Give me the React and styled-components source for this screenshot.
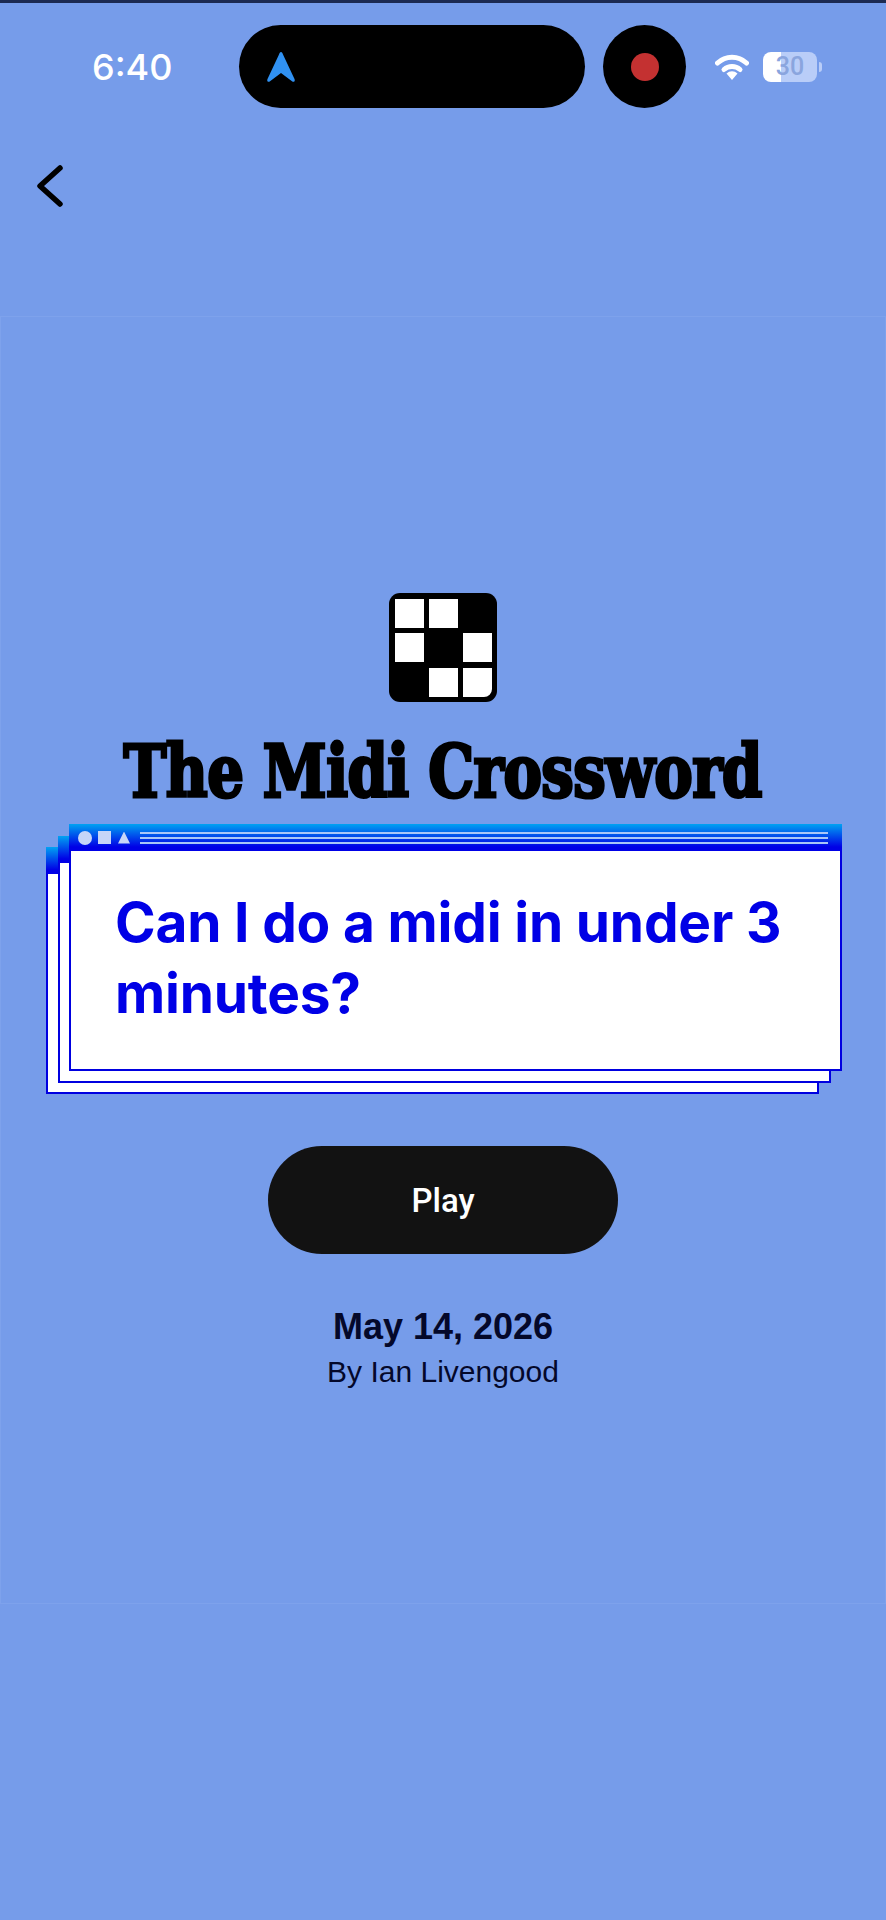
import styled, { createGlobalStyle } from "styled-components";

const GlobalStyle = createGlobalStyle`
  html, body {
    margin: 0;
    padding: 0;
    background: #769cea;
  }
`;

const Page = styled.div`
  width: 886px;
  height: 1920px;
  overflow: hidden;
  background: #769cea;
  border-top: 3px solid #1c2a52;
  box-sizing: border-box;
  font-family: "Liberation Sans", Arial, sans-serif;
`;

const StatusBar = styled.div`
  display: flex;
  align-items: center;
  height: 83px;
  margin-top: 22px;
  padding-left: 92px;
`;

const Clock = styled.div`
  width: 147px;
  color: #fff;
  font-family: Inter, sans-serif;
  font-size: 36px;
  font-weight: 500;
`;

const Island = styled.div`
  width: 346px;
  height: 83px;
  border-radius: 42px;
  background: #000;
  display: flex;
  align-items: center;
  padding-left: 28px;
  box-sizing: border-box;
`;

const RecordBubble = styled.div`
  width: 83px;
  height: 83px;
  margin-left: 18px;
  border-radius: 50%;
  background: #000;
  display: flex;
  align-items: center;
  justify-content: center;
`;

const RecordDot = styled.div`
  width: 28px;
  height: 28px;
  border-radius: 50%;
  background: #c43131;
`;

const WifiIcon = styled.svg`
  width: 34px;
  height: 27px;
  margin-left: 29px;
`;

const Battery = styled.div`
  width: 54px;
  height: 30px;
  margin-left: 14px;
  border-radius: 8px;
  background: linear-gradient(to right, #fff 33%, #b9cdf8 33%);
  color: #8aa5de;
  font-family: Roboto, sans-serif;
  font-size: 25px;
  font-weight: 500;
  line-height: 30px;
  text-align: center;
  position: relative;

  &::after {
    content: "";
    position: absolute;
    right: -5px;
    top: 10px;
    width: 3px;
    height: 10px;
    border-radius: 0 3px 3px 0;
    background: #b9cdf8;
  }
`;

const NavRow = styled.div`
  height: 208px;
  padding: 54px 0 0 34px;
  box-sizing: border-box;
`;

const BackIcon = styled.svg`
  display: block;
  width: 32px;
  height: 48px;
`;

const Panel = styled.main`
  height: 1288px;
  box-sizing: border-box;
  border: 1px solid #7ea2ec;
  padding-top: 276px;
  display: flex;
  flex-direction: column;
  align-items: center;
`;

const Logo = styled.svg`
  display: block;
  width: 108px;
  height: 109px;
`;

const GameTitle = styled.h1`
  margin: 30px 0 0;
  color: #000;
  font-family: "DejaVu Serif Condensed", "DejaVu Serif", serif;
  font-size: 72px;
  font-weight: 700;
  line-height: 79px;
  letter-spacing: -0.6px;
  white-space: nowrap;
  -webkit-text-stroke: 3px #000;
  transform: scaleX(0.89);
`;

const WindowStack = styled.div`
  display: grid;
  width: 796px;
  margin-top: 13px;
  margin-left: 2px;
`;

const Window = styled.div`
  grid-area: 1 / 1;
  margin: ${(p) => p.$depth * 11.5}px ${(p) => p.$depth * 11.5}px
    ${(p) => (2 - p.$depth) * 11.5}px ${(p) => (2 - p.$depth) * 11.5}px;
  background: #fff;
  border: solid #0000e0;
  border-width: 0 2px 2px;
  display: flex;
  flex-direction: column;
`;

const TitleBar = styled.div`
  height: 27px;
  margin: 0 -2px;
  padding: 0 14px 0 9px;
  flex-shrink: 0;
  background: linear-gradient(to bottom, #00a2f2, #0000e6 85%);
  display: flex;
  align-items: center;
  gap: 6px;
`;

const Dot = styled.span`
  width: 14px;
  height: 14px;
  border-radius: 50%;
  background: #c6d5f8;
`;

const Square = styled.span`
  width: 13px;
  height: 13px;
  background: #c6d5f8;
`;

const Triangle = styled.span`
  width: 12px;
  height: 12px;
  margin-left: 1px;
  background: #c6d5f8;
  clip-path: polygon(50% 0, 100% 100%, 0 100%);
`;

const Stripes = styled.div`
  flex: 1;
  height: 12px;
  margin-left: 4px;
  background: repeating-linear-gradient(
    to bottom,
    #a9c6f8 0,
    #a9c6f8 2px,
    transparent 2px,
    transparent 5px
  );
`;

const Question = styled.div`
  padding: 36px 20px 40px 44px;
  color: #0000e6;
  font-family: Inter, sans-serif;
  font-size: 55px;
  font-weight: 700;
  line-height: 71px;
  letter-spacing: -0.2px;
`;

const PlayButton = styled.button`
  width: 350px;
  height: 108px;
  margin-top: 52px;
  border: none;
  border-radius: 54px;
  background: #121212;
  color: #fff;
  font-family: Roboto, sans-serif;
  font-size: 33px;
  font-weight: 500;
`;

const DateLine = styled.div`
  margin-top: 53px;
  color: #04082a;
  font-family: "Liberation Sans", sans-serif;
  font-size: 36px;
  font-weight: 700;
  line-height: 40px;
`;

const Byline = styled.div`
  margin-top: 5px;
  color: #04082a;
  font-family: "Liberation Sans", sans-serif;
  font-size: 30px;
  line-height: 40px;
`;

const backWindows = [0, 1];

export default function App() {
  return (
    <Page>
      <GlobalStyle />
      <StatusBar>
        <Clock>6:40</Clock>
        <Island>
          <svg width="28" height="30" viewBox="0 0 28 30">
            <path
              d="M14 0 C15 0 15.500 1 16 2.500 L27.500 27 C28.500 29.500 26.500 30.500 25 29.300 L14 21 L3 29.300 C1.500 30.500 -0.500 29.500 0.500 27 L12 2.500 C12.500 1 13 0 14 0 Z"
              fill="#3091f2"
            />
          </svg>
        </Island>
        <RecordBubble>
          <RecordDot />
        </RecordBubble>
        <WifiIcon viewBox="0 0 34 27">
          <path d="M2.500 10 A21 21 0 0 1 31.500 10" fill="none" stroke="#fff" strokeWidth="5" strokeLinecap="round" />
          <path d="M9 16.500 A12 12 0 0 1 25 16.500" fill="none" stroke="#fff" strokeWidth="5" strokeLinecap="round" />
          <path d="M17 27 L11.500 20.500 A8 8 0 0 1 22.500 20.500 Z" fill="#fff" />
        </WifiIcon>
        <Battery>30</Battery>
      </StatusBar>

      <NavRow>
        <BackIcon viewBox="0 0 32 48">
          <path d="M26 6 L6 24 L26 42" fill="none" stroke="#000" strokeWidth="5.500" strokeLinecap="round" strokeLinejoin="round" />
        </BackIcon>
      </NavRow>

      <Panel>
        <Logo viewBox="0 0 108 109">
          <rect width="108" height="109" rx="11" fill="#000" />
          <path
            fill="#fff"
            d="M6 6h29v29H6z M40 6h29v29H40z M6 40h29v29H6z M74 40h29v29H74z M40 75h29v29H40z M74 75h29v21a8 8 0 0 1-8 8H74z"
          />
        </Logo>
        <GameTitle>The Midi Crossword</GameTitle>

        <WindowStack>
          {backWindows.map((n) => (
            <Window key={n} $depth={2 - n}>
              <TitleBar />
            </Window>
          ))}
          <Window $depth={0}>
            <TitleBar>
              <Dot />
              <Square />
              <Triangle />
              <Stripes />
            </TitleBar>
            <Question>Can I do a midi in under 3 minutes?</Question>
          </Window>
        </WindowStack>

        <PlayButton>Play</PlayButton>
        <DateLine>May 14, 2026</DateLine>
        <Byline>By Ian Livengood</Byline>
      </Panel>
    </Page>
  );
}
